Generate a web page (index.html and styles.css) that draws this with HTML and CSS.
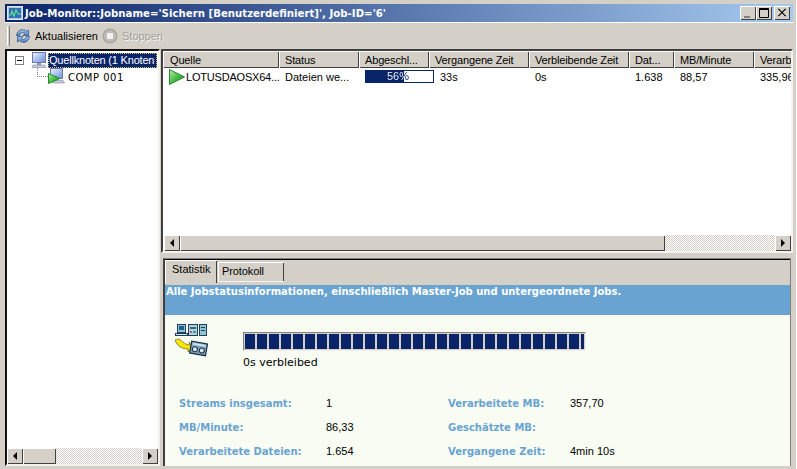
FILE: index.html
```html
<!DOCTYPE html>
<html lang="de">
<head>
<meta charset="utf-8">
<title>Job-Monitor</title>
<link rel="stylesheet" href="styles.css">
</head>
<body>
<svg class="defs" width="0" height="0">
  <defs>
    <linearGradient id="screen" x1="0" y1="0" x2="1" y2="1"><stop offset="0" stop-color="#f2f6ff"/><stop offset=".5" stop-color="#a9c0ee"/><stop offset="1" stop-color="#6f8fd6"/></linearGradient>
    <linearGradient id="green" x1="0" y1="0" x2="1" y2="1"><stop offset="0" stop-color="#b4eeb0"/><stop offset=".55" stop-color="#3fb83f"/><stop offset="1" stop-color="#1f8f2a"/></linearGradient>
    <linearGradient id="bluebar" x1="0" y1="0" x2="0" y2="1"><stop offset="0" stop-color="#a9c8ef"/><stop offset="1" stop-color="#4d7cc0"/></linearGradient>
  </defs>
</svg>
<div class="window">
  <div class="titlebar">
    <svg class="title-icon" width="16" height="16" viewBox="0 0 16 16"><rect x="0.5" y="1.5" width="15" height="13" fill="#b7c6de" stroke="#dfe6f2"/><rect x="2" y="3" width="12" height="10" fill="#2f6fb5"/><path d="M2 10h2l1-4 2 5 2-6 2 4h3" fill="none" stroke="#63e08c" stroke-width="1.2"/></svg>
    <span class="title-text">Job-Monitor::Jobname='Sichern [Benutzerdefiniert]', Job-ID='6'</span>
    <div class="winbtns">
      <span class="winbtn"><svg width="16" height="14" viewBox="0 0 16 14"><rect x="4" y="10" width="6" height="2" fill="#808080"/></svg></span>
      <span class="winbtn"><svg width="16" height="14" viewBox="0 0 16 14"><path d="M3.5 2.5h9v9h-9zM3 3.5h10" fill="none" stroke="#000"/></svg></span>
      <span class="winbtn winbtn-close"><svg width="16" height="14" viewBox="0 0 16 14"><path d="M4 3l7 7h1L5 3zM11 3l-7 7h1l7-7z" fill="#000" stroke="#000" stroke-width=".5"/></svg></span>
    </div>
  </div>
  <div class="toolbar">
    <span class="grip"></span>
    <div class="tool">
      <svg width="16" height="16" viewBox="0 0 16 16"><path d="M1.500 7.500C2 3.500 5 1.200 8.500 1.800c1.300.2 2.400.8 3.200 1.700L13.500 2v5.500H8l2-2C9.300 4.700 8.500 4.400 7.600 4.500 5.800 4.700 4.800 6 4.500 7.500z" fill="url(#bluebar)" stroke="#34588f" stroke-width=".8"/><path d="M14.500 8.500c-.5 4-3.500 6.300-7 5.700-1.300-.2-2.400-.8-3.200-1.700L2.500 14V8.500H8l-2 2c.7.8 1.500 1.100 2.400 1 1.800-.2 2.800-1.500 3.100-3z" fill="url(#bluebar)" stroke="#34588f" stroke-width=".8"/></svg>
      <span>Aktualisieren</span>
    </div>
    <div class="tool tool-off">
      <svg width="16" height="16" viewBox="0 0 16 16"><circle cx="8" cy="8" r="7.5" fill="#a8a6a0"/><circle cx="8" cy="8" r="6" fill="#bebcb6"/><rect x="5" y="5" width="6" height="6" fill="#f2f1ee"/></svg>
      <span>Stoppen</span>
    </div>
  </div>
  <div class="main">
    <div class="tree sunken">
      <div class="tree-body">
        <div class="tree-root">
          <span class="expander"></span>
          <svg class="pc" width="16" height="16" viewBox="0 0 16 16"><rect x="1.500" y=".5" width="13" height="10" fill="url(#screen)" stroke="#6c7aa8"/><rect x="6" y="11" width="4" height="2" fill="#8d96b4"/><path d="M2 13h12l1 2.500H1z" fill="#c4cbdc" stroke="#7f88a8" stroke-width=".6"/></svg>
          <span class="tree-selected">Quellknoten (1 Knoten</span>
        </div>
        <div class="tree-child">
          <span class="dots"></span>
          <span class="child-icon">
            <svg width="17" height="16" viewBox="0 0 17 16"><rect x="2.500" y=".5" width="12" height="10" fill="url(#screen)" stroke="#6c7aa8"/><path d="M5 12.500h10l1.500 2.500H5z" fill="#c4cbdc" stroke="#7f88a8" stroke-width=".6"/><path d="M.5 5.500L12 10.500.5 15.500z" fill="url(#green)" stroke="#1f8f2a"/></svg>
          </span>
          <span class="mono-ish">COMP 001</span>
        </div>
      </div>
      <div class="hscroll">
        <span class="sbtn"><i class="arrow-left"></i></span>
        <span class="thumb thumb-tree"></span>
        <span class="track"></span>
        <span class="sbtn"><i class="arrow-right"></i></span>
      </div>
    </div>
    <div class="right">
      <div class="list sunken">
        <div class="list-head">
          <span class="hc c1">Quelle</span>
          <span class="hc c2">Status</span>
          <span class="hc c3">Abgeschl...</span>
          <span class="hc c4">Vergangene Zeit</span>
          <span class="hc c5">Verbleibende Zeit</span>
          <span class="hc c6">Dat...</span>
          <span class="hc c7">MB/Minute</span>
          <span class="hc c8">Verarb</span>
        </div>
        <div class="list-row">
          <span class="td c1 source"><svg width="16" height="16" viewBox="0 0 16 16"><path d="M.5 .5L15.500 8 .5 15.500z" fill="url(#green)" stroke="#2a8a33"/></svg>LOTUSDAOSX64...</span>
          <span class="td c2">Dateien we...</span>
          <span class="td c3 td-bar"><span class="pct"><span class="pct-fill"></span><span class="pct-text">56%</span></span></span>
          <span class="td c4 td-time">33s</span>
          <span class="td c5">0s</span>
          <span class="td c6">1.638</span>
          <span class="td c7">88,57</span>
          <span class="td c8">335,96</span>
        </div>
        <div class="list-fill"></div>
        <div class="hscroll">
          <span class="sbtn"><i class="arrow-left"></i></span>
          <span class="thumb thumb-list"></span>
          <span class="track"></span>
          <span class="sbtn"><i class="arrow-right"></i></span>
        </div>
      </div>
      <div class="tabs-panel">
        <div class="tabs">
          <span class="tab tab-on">Statistik</span>
          <span class="tab">Protokoll</span>
        </div>
        <div class="band">Alle Jobstatusinformationen, einschließlich Master-Job und untergeordnete Jobs.</div>
        <div class="stats">
          <div class="progress-row">
            <svg class="job-icon" width="33" height="33" viewBox="0 0 33 33">
              <rect x="2.500" y=".5" width="8" height="8" fill="#8fc4da" stroke="#1f3f5c"/><rect x="4" y="2" width="5" height="4" fill="#1e5f86"/><rect x=".5" y="9.500" width="12" height="2" fill="#d2e4ea" stroke="#1f3f5c"/>
              <rect x="13.500" y=".5" width="9" height="11" fill="#a8d6de" stroke="#1f3f5c"/><path d="M15 4h6" stroke="#1f3f5c" stroke-width="1.500"/><path d="M15 8h2" stroke="#d02828" stroke-width="1.500"/><path d="M18 8h3" stroke="#1f3f5c"/>
              <rect x="24.500" y=".5" width="7" height="11" fill="#8fc6ce" stroke="#1f3f5c"/><path d="M26 3.500h4M26 6.500h4" stroke="#1f3f5c"/>
              <path d="M0 16c4-2 6 0 8 2 2 2 4 3 7 3l-1-3 4 5-5 5v-3c-6 0-11-3-13-9z" fill="#f7e600" stroke="#7a6f20" stroke-width=".8"/>
              <g transform="rotate(10 24 25)"><rect x="15.500" y="18.500" width="16" height="12" fill="#7fa2bb" stroke="#132c42" stroke-width="1.200"/><rect x="17" y="20" width="13" height="2" fill="#cfe0ea"/><circle cx="20" cy="26" r="2.500" fill="#dbe7ee" stroke="#132c42"/><circle cx="27" cy="26" r="2.500" fill="#dbe7ee" stroke="#132c42"/></g>
            </svg>
            <div class="progress-col">
              <div class="progress"></div>
              <div class="remain">0s verbleibed</div>
            </div>
          </div>
          <div class="grid">
            <span class="lbl">Streams insgesamt:</span><span class="val">1</span><span class="lbl">Verarbeitete MB:</span><span class="val">357,70</span>
            <span class="lbl">MB/Minute:</span><span class="val">86,33</span><span class="lbl">Geschätzte MB:</span><span class="val"></span>
            <span class="lbl">Verarbeitete Dateien:</span><span class="val">1.654</span><span class="lbl">Vergangene Zeit:</span><span class="val">4min 10s</span>
          </div>
        </div>
      </div>
    </div>
  </div>
</div>
</body>
</html>
```
FILE: styles.css
```css
* { box-sizing: border-box; }
html, body { margin: 0; height: 100%; }
body { background: #d4d0c8; font: 11px "Liberation Sans", Arial, sans-serif; color: #000; overflow: hidden; }
.defs { position: absolute; }
.window { width: 797px; height: 469px; padding: 4px 3px 3px 5px; display: flex; flex-direction: column; border-right: 1px solid #fff; }
.titlebar { height: 18px; flex: none; display: flex; align-items: center; padding: 0 3px 0 2px; background: linear-gradient(90deg, #0a246a, #a6caf0); }
.title-icon { flex: none; margin-right: 2px; }
.title-text { flex: 1; color: #fff; font: bold 10.2px "DejaVu Sans", sans-serif; white-space: nowrap; }
.winbtns { display: flex; flex: none; }
.winbtn { width: 16px; height: 14px; background: #d4d0c8; box-shadow: inset 1px 1px #fff, inset -1px -1px #404040; display: block; }
.winbtn svg { display: block; }
.winbtn-close { margin-left: 2px; }
.toolbar { height: 26px; flex: none; display: flex; align-items: center; padding: 0 0 0 2px; border-top: 1px solid #fff; gap: 4px; }
.grip { width: 3px; height: 20px; border-left: 1px solid #fff; border-right: 1px solid #808080; margin-right: 1px; }
.tool { display: flex; align-items: center; gap: 4px; }
.tool-off { color: #a09e98; text-shadow: 1px 1px #f4f3f0; }
.main { flex: 1; min-height: 0; display: flex; gap: 1px; margin-top: 1px; }
.sunken { border-style: solid; border-width: 2px; border-color: #404040 #f4f3f0 #f4f3f0 #404040; background: #fff; }
.tree { width: 155px; flex: none; display: flex; flex-direction: column; border-color: #111 #f4f3f0 #f4f3f0 #111; }
.tree-body { flex: 1; padding: 1px 0 0 8px; }
.tree-root { display: flex; align-items: center; height: 16px; }
.expander { width: 9px; height: 9px; flex: none; border: 1px solid #808080; margin-right: 7px; background: linear-gradient(#000, #000) center / 5px 1px no-repeat #fff; }
.pc { flex: none; margin-right: 1px; }
.tree-selected { width: 109px; flex: none; overflow: hidden; background: #0a246a; color: #fff; outline: 1px dotted #d8c060; outline-offset: -1px; padding: 1px; white-space: nowrap; line-height: 13px; letter-spacing: -.2px; }
.tree-child { display: flex; align-items: center; height: 16px; padding-left: 22px; }
.dots { width: 11px; height: 9px; flex: none; margin-top: -8px; border-left: 1px dotted #808080; border-bottom: 1px dotted #808080; }
.child-icon { display: block; height: 16px; flex: none; margin-right: 3px; }
.child-icon svg { display: block; }
.mono-ish { font: 10px "DejaVu Sans", sans-serif; letter-spacing: .5px; white-space: nowrap; padding-top: 2px; }
.hscroll { height: 16px; flex: none; display: flex; }
.sbtn { width: 16px; height: 16px; flex: none; background: #d4d0c8; box-shadow: inset 1px 1px #fff, inset -1px -1px #404040; display: flex; align-items: center; justify-content: center; }
.arrow-left { border: 4px solid transparent; border-right-color: #000; border-left: 0; }
.arrow-right { border: 4px solid transparent; border-left-color: #000; border-right: 0; }
.thumb { flex: none; height: 16px; background: #d4d0c8; box-shadow: inset 1px 1px #fff, inset -1px -1px #404040; }
.thumb-tree { width: 33px; }
.thumb-list { width: 485px; }
.track { flex: 1; background: conic-gradient(#fff 25%, #d4d0c8 0 50%, #fff 0 75%, #d4d0c8 0) 0 0 / 2px 2px; }
.right { flex: 1; min-width: 0; display: flex; flex-direction: column; gap: 5px; }
.list { height: 204px; flex: none; display: flex; flex-direction: column; overflow: hidden; }
.list > .hscroll { margin-left: 1px; }
.list-head { height: 17px; flex: none; display: flex; background: #d4d0c8; }
.hc { flex: none; padding: 3px 0 0 6px; white-space: nowrap; overflow: hidden; letter-spacing: -.15px; box-shadow: inset 1px 1px #fff, inset -1px -1px #404040; }
.hc.c1 { padding-left: 7px; }
.c1 { width: 116px; }
.c2 { width: 80px; }
.c3 { width: 70px; }
.c4 { width: 100px; }
.c5 { width: 100px; }
.c6 { width: 45px; }
.c7 { width: 80px; }
.c8 { width: 39px; }
.list-row { height: 17px; flex: none; display: flex; align-items: center; }
.td { flex: none; padding-left: 6px; white-space: nowrap; overflow: hidden; }
.td.td-time { padding-left: 11px; }
.td.td-bar { overflow: visible; }
.source { display: flex; align-items: center; gap: 1px; letter-spacing: -.2px; }
.source svg { flex: none; }
.list-fill { flex: 1; }
.pct { display: block; position: relative; width: 69px; height: 13px; border: 1px solid #0a246a; background: #fff; }
.pct-fill { display: block; width: 38px; height: 100%; background: #0a246a; }
.pct-text { position: absolute; left: 21px; top: -1px; line-height: 13px; color: transparent; background: linear-gradient(90deg, #fff 17px, #0a246a 17px); -webkit-background-clip: text; background-clip: text; }
.tabs-panel { flex: 1; min-height: 0; display: flex; flex-direction: column; margin: 0 2px; border-top: 1px solid #808080; border-left: 2px solid #404040; border-right: 1px solid #808080; background: #f9fcf2; }
.tabs { height: 26px; flex: none; display: flex; align-items: flex-end; background: #d4d0c8; padding-bottom: 4px; border-top: 1px solid #000; gap: 1px; }
.tab { width: 66px; height: 19px; padding: 3px 0 0 4px; background: #d4d0c8; letter-spacing: -.1px; box-shadow: inset 1px 1px #fff, inset -1px 0 #404040, 0 1px #f4f3f0; }
.tab-on { width: 52px; height: 23px; padding: 3px 0 0 7px; margin-bottom: -2px; letter-spacing: 0; box-shadow: inset 1px 1px #fff, inset -1px 0 #404040; }
.band { height: 30px; flex: none; background: #69a3d1; color: #fff; font: bold 10px "DejaVu Sans", sans-serif; padding: 1px 0 0 1px; white-space: nowrap; }
.stats { flex: 1; min-height: 0; padding: 9px 0 0 10px; display: flex; flex-direction: column; }
.progress-row { display: flex; gap: 35px; height: 67px; flex: none; }
.job-icon { flex: none; }
.progress-col { display: flex; flex-direction: column; }
.progress { width: 343px; height: 19px; margin-top: 8px; padding: 1px; border: 1px solid; border-color: #808080 #f4f3f0 #f4f3f0 #808080; background: repeating-linear-gradient(90deg, #0a246a 0 10px, #d4d0c8 10px 12px) content-box, #d4d0c8; }
.remain { margin-top: 5px; font: 11px "DejaVu Sans", sans-serif; white-space: nowrap; }
.grid { display: grid; grid-template-columns: 147px 122px 122px 1fr; grid-auto-rows: 24px; padding-left: 4px; align-items: center; }
.lbl { font: bold 10px "DejaVu Sans", sans-serif; color: #69a3d1; white-space: nowrap; }
.val { font-size: 11px; }
```
